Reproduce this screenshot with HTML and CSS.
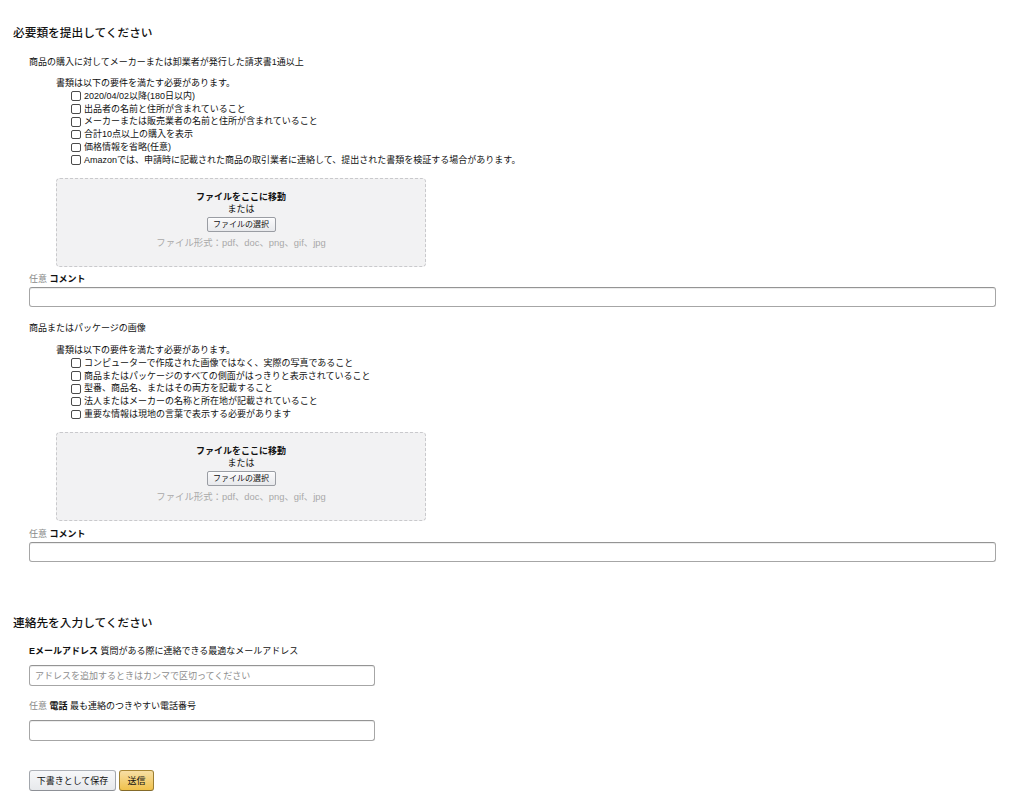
FILE: index.html
```html
<!DOCTYPE html>
<html lang="ja">
<head>
<meta charset="utf-8">
<link rel="stylesheet" href="styles.css">
</head>
<body>
<main class="page">
  <section class="section">
    <h2 class="section-title">必要類を提出してください</h2>

    <div class="doc-block">
      <p class="doc-title">商品の購入に対してメーカーまたは卸業者が発行した請求書1通以上</p>
      <div class="criteria">
        <p class="criteria-head">書類は以下の要件を満たす必要があります。</p>
        <ul class="checklist">
          <li><span class="box"></span>2020/04/02以降(180日以内)</li>
          <li><span class="box"></span>出品者の名前と住所が含まれていること</li>
          <li><span class="box"></span>メーカーまたは販売業者の名前と住所が含まれていること</li>
          <li><span class="box"></span>合計10点以上の購入を表示</li>
          <li><span class="box"></span>価格情報を省略(任意)</li>
          <li><span class="box"></span>Amazonでは、申請時に記載された商品の取引業者に連絡して、提出された書類を検証する場合があります。</li>
        </ul>
      </div>
      <div class="dropzone">
        <p class="dz-main">ファイルをここに移動</p>
        <p class="dz-or">または</p>
        <button class="btn-file" type="button">ファイルの選択</button>
        <p class="dz-types">ファイル形式：pdf、doc、png、gif、jpg</p>
      </div>
      <label class="field-label"><span class="opt">任意</span> <b>コメント</b></label>
      <input class="text-input wide" type="text">
    </div>

    <div class="doc-block second">
      <p class="doc-title">商品またはパッケージの画像</p>
      <div class="criteria">
        <p class="criteria-head">書類は以下の要件を満たす必要があります。</p>
        <ul class="checklist">
          <li><span class="box"></span>コンピューターで作成された画像ではなく、実際の写真であること</li>
          <li><span class="box"></span>商品またはパッケージのすべての側面がはっきりと表示されていること</li>
          <li><span class="box"></span>型番、商品名、またはその両方を記載すること</li>
          <li><span class="box"></span>法人またはメーカーの名称と所在地が記載されていること</li>
          <li><span class="box"></span>重要な情報は現地の言葉で表示する必要があります</li>
        </ul>
      </div>
      <div class="dropzone">
        <p class="dz-main">ファイルをここに移動</p>
        <p class="dz-or">または</p>
        <button class="btn-file" type="button">ファイルの選択</button>
        <p class="dz-types">ファイル形式：pdf、doc、png、gif、jpg</p>
      </div>
      <label class="field-label"><span class="opt">任意</span> <b>コメント</b></label>
      <input class="text-input wide" type="text">
    </div>
  </section>

  <section class="section contact">
    <h2 class="section-title">連絡先を入力してください</h2>
    <div class="contact-block">
      <label class="field-label"><b>Eメールアドレス</b> 質問がある際に連絡できる最適なメールアドレス</label>
      <input class="text-input narrow" type="text" placeholder="アドレスを追加するときはカンマで区切ってください">
      <label class="field-label second"><span class="opt">任意</span> <b>電話</b> 最も連絡のつきやすい電話番号</label>
      <input class="text-input narrow" type="text">
      <div class="actions">
        <button class="btn btn-secondary" type="button">下書きとして保存</button>
        <button class="btn btn-primary" type="button">送信</button>
      </div>
    </div>
  </section>
</main>
</body>
</html>
```

FILE: styles.css
```css
* { box-sizing: border-box; }
html, body { margin: 0; padding: 0; background: #fff; }
body {
  font-family: "Liberation Sans", "Noto Sans CJK JP", sans-serif;
  font-size: 9px;
  line-height: 12.8px;
  color: #111;
}
p { margin: 0; }
.page {
  padding: 25px 28px 0 13px;
}
.section-title {
  margin: 0;
  font-size: 11.7px;
  line-height: 16px;
  font-weight: 500;
  color: #111;
}
.doc-block {
  padding-left: 16px;
  margin-top: 14.5px;
}
.doc-block.second { margin-top: 15.6px; }
.doc-title { line-height: 13px; }
.criteria {
  padding-left: 27px;
  margin-top: 8.5px;
}
.criteria-head { line-height: 12.8px; color: #0a0a0a; }
.checklist {
  list-style: none;
  margin: 0;
  padding: 0 0 0 15px;
}
.checklist li {
  display: flex;
  align-items: center;
  line-height: 12.8px;
  white-space: nowrap;
}
.box {
  flex: none;
  width: 9.5px;
  height: 9.5px;
  border: 1px solid #4a4a4a;
  border-radius: 2px;
  margin-right: 3.5px;
  background: #fff;
}
.dropzone {
  margin: 11px 0 0 27px;
  width: 370px;
  height: 89px;
  border: 1.5px dashed #c9c9cc;
  border-radius: 4px;
  background: #f2f2f3;
  display: flex;
  flex-direction: column;
  align-items: center;
  padding-top: 12.5px;
  text-align: center;
}
.dz-main { font-weight: bold; line-height: 12px; }
.dz-or { line-height: 12px; }
.btn-file {
  margin-top: 2px;
  height: 15px;
  width: 69px;
  padding: 0;
  font-family: inherit;
  font-size: 8px;
  line-height: 13px;
  color: #111;
  border: 1px solid #9a9da3;
  border-radius: 2px;
  background: linear-gradient(#fbfbfc, #e8e9ec);
  box-shadow: 0 1px 0 rgba(255,255,255,.6) inset;
}
.dz-types {
  margin-top: 5px;
  line-height: 12px;
  color: #a9a9a9;
  font-size: 9.4px;
}
.field-label {
  display: block;
  margin-top: 6.5px;
  line-height: 12.8px;
}
.doc-block.second .field-label { margin-top: 7.5px; }
.field-label b { font-weight: bold; }
.opt { color: #8a8a8a; }
.text-input {
  display: block;
  margin-top: 1px;
  height: 20px;
  border: 1px solid #a6a6a6;
  border-top-color: #949494;
  border-radius: 3px;
  box-shadow: 0 1px 0 rgba(0,0,0,.07) inset, 0 1px 0 rgba(255,255,255,.5);
  background: #fff;
  font-family: inherit;
  font-size: 9px;
  padding: 0 5px;
  outline: none;
}
.text-input::placeholder { color: #8e8e8e; font-size: 9px; }
.wide { width: 100%; }
.contact { margin-top: 53px; }
.contact-block { padding-left: 16px; margin-top: 13.6px; }
.contact-block .field-label { margin-top: 0; }
.contact-block .field-label.second { margin-top: 13.6px; }
.narrow {
  width: 346px;
  height: 21px;
  margin-top: 7.6px;
}
.actions {
  display: flex;
  gap: 3px;
  margin-top: 29px;
}
.btn {
  height: 21px;
  padding: 0;
  font-family: inherit;
  font-size: 9px;
  color: #111;
  border: 1px solid;
  border-radius: 3px;
  cursor: pointer;
}
.btn-secondary {
  width: 87px;
  background: linear-gradient(#f7f8fa, #e7e9ec);
  border-color: #adb1b8 #a2a6ac #8d9096;
}
.btn-primary {
  width: 35px;
  background: linear-gradient(#f7dfa5, #f0c14b);
  border-color: #a88734 #9c7e31 #846a29;
}
```
